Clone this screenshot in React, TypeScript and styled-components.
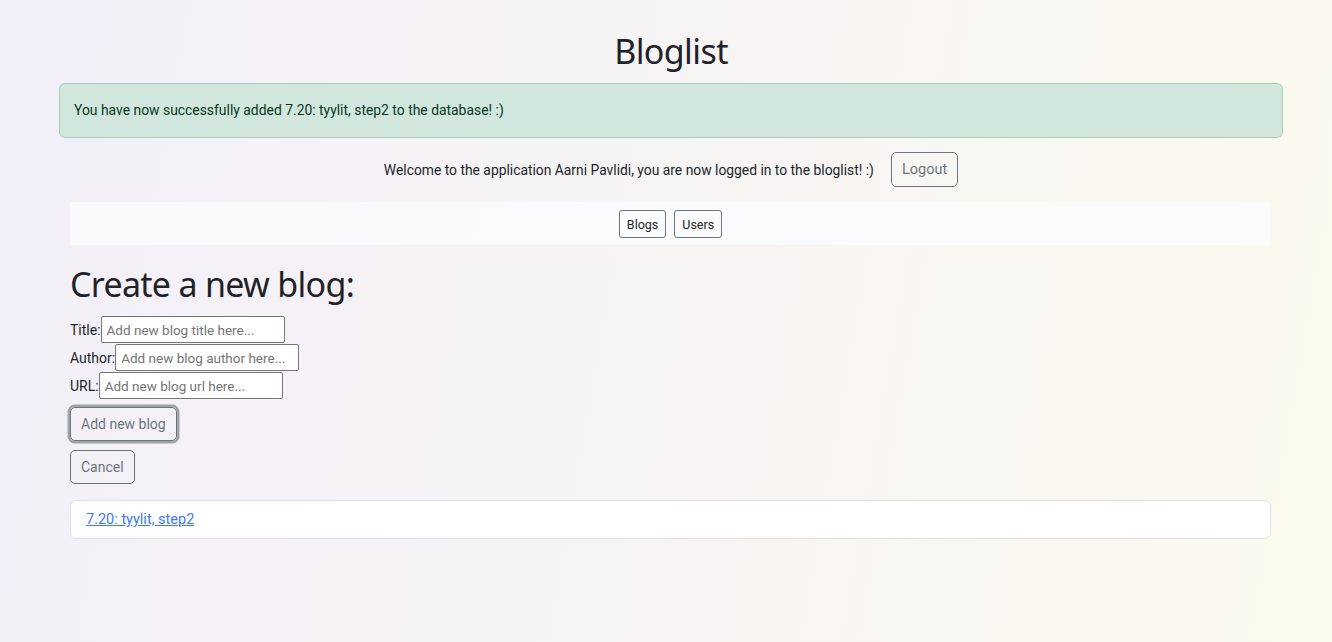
import React from "react";
import styled, { createGlobalStyle } from "styled-components";

const GlobalStyle = createGlobalStyle`
  html, body { margin: 0; padding: 0; }
  body {
    min-height: 642px;
    background: linear-gradient(100deg, #f3eff9 0%, #f7f4f4 50%, #fbfaee 100%);
    font-family: Roboto, "Liberation Sans", sans-serif;
    color: #212529;
  }
`;

const Page = styled.div`
  padding: 30px 49px 40px 59px;
`;

const Title = styled.h1`
  margin: 0;
  text-align: center;
  font-family: "Noto Sans", sans-serif;
  font-weight: 400;
  font-size: 34px;
  letter-spacing: -0.6px;
  line-height: 43px;
  color: #1f2329;
`;

const Alert = styled.div`
  margin-top: 10px;
  padding: 16px 14px;
  background: #d1e7dd;
  border: 1px solid #a3cfbb;
  border-radius: 6px;
  color: #0a3622;
  font-size: 13.9px;
  line-height: 21px;
`;

const WelcomeRow = styled.div`
  margin-top: 14px;
  display: flex;
  justify-content: center;
  align-items: center;
  gap: 17px;
  font-size: 13.85px;
`;

const OutlineButton = styled.button<{ $size?: "sm" | "md"; $focus?: boolean }>`
  font-family: Roboto, "Liberation Sans", sans-serif;
  background: transparent;
  color: ${(p) => (p.$size === "sm" ? "#212529" : "#6c757d")};
  border: 1px solid #6c757d;
  border-radius: ${(p) => (p.$size === "sm" ? "3px" : "5px")};
  font-size: ${(p) => (p.$size === "sm" ? "12.5px" : "14px")};
  height: ${(p) => (p.$size === "sm" ? "28px" : "34px")};
  padding: ${(p) => (p.$size === "sm" ? "0 7px" : "0 10px")};
  box-shadow: ${(p) => (p.$focus ? "0 0 0 2.5px #9ea2a8" : "none")};
  cursor: pointer;
`;

const LogoutButton = styled(OutlineButton)`
  height: 35px;
  font-size: 14.5px;
`;

const Content = styled.div`
  padding: 0 12px 0 11px;
`;

const NavBar = styled.nav`
  margin-top: 15px;
  height: 43px;
  box-sizing: border-box;
  padding: 8px 0 7px;
  background: rgba(250, 251, 253, 0.85);
  display: flex;
  justify-content: center;
  gap: 8px;
`;

const FormHeading = styled.h2`
  margin: 18px 0 0;
  font-family: "Noto Sans", sans-serif;
  font-weight: 400;
  font-size: 34px;
  letter-spacing: -0.7px;
  line-height: 43px;
  color: #1f2329;
`;

const Form = styled.form`
  margin-top: 10px;
  display: flex;
  flex-direction: column;
  align-items: flex-start;
  gap: 1px;
`;

const FieldRow = styled.label`
  display: flex;
  align-items: center;
  font-size: 14px;
`;

const TextInput = styled.input`
  width: 184px;
  height: 27px;
  box-sizing: border-box;
  border: 1px solid #767676;
  border-radius: 2px;
  padding: 1px 5px;
  font-family: Roboto, "Liberation Sans", sans-serif;
  font-size: 13.5px;
  background: #fff;
  &::placeholder { color: #757575; }
`;

const ButtonStack = styled.div`
  margin-top: 8px;
  display: flex;
  flex-direction: column;
  align-items: flex-start;
  gap: 9px;
`;

const BlogItem = styled.div`
  margin-top: 16px;
  background: #fff;
  border: 1px solid #dee2e6;
  border-radius: 6px;
  height: 39px;
  box-sizing: border-box;
  padding: 0 15px;
  display: flex;
  align-items: center;
`;

const BlogLink = styled.a`
  color: #3b78f6;
  font-size: 14.5px;
  text-decoration: underline;
`;

export default function App() {
  return (
    <>
      <GlobalStyle />
      <Page>
        <Title>Bloglist</Title>
        <Alert>You have now successfully added 7.20: tyylit, step2 to the database! :)</Alert>
        <WelcomeRow>
          <span>Welcome to the application Aarni Pavlidi, you are now logged in to the bloglist! :)</span>
          <LogoutButton>Logout</LogoutButton>
        </WelcomeRow>
        <Content>
          <NavBar>
            <OutlineButton $size="sm">Blogs</OutlineButton>
            <OutlineButton $size="sm">Users</OutlineButton>
          </NavBar>
          <FormHeading>Create a new blog:</FormHeading>
          <Form onSubmit={(e) => e.preventDefault()}>
            <FieldRow>
              Title:<TextInput placeholder="Add new blog title here..." />
            </FieldRow>
            <FieldRow>
              Author:<TextInput placeholder="Add new blog author here..." />
            </FieldRow>
            <FieldRow>
              URL:<TextInput placeholder="Add new blog url here..." />
            </FieldRow>
          </Form>
          <ButtonStack>
            <OutlineButton $focus>Add new blog</OutlineButton>
            <OutlineButton>Cancel</OutlineButton>
          </ButtonStack>
          <BlogItem>
            <BlogLink href="#">7.20: tyylit, step2</BlogLink>
          </BlogItem>
        </Content>
      </Page>
    </>
  );
}
